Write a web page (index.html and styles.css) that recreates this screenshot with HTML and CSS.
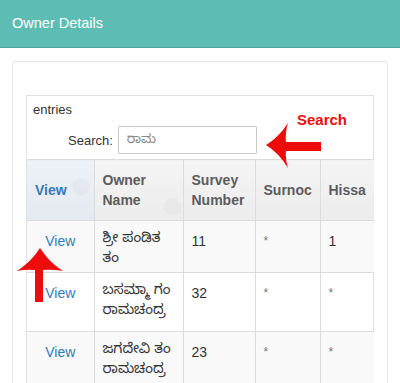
FILE: index.html
```html
<!DOCTYPE html>
<html>
<head>
<meta charset="utf-8">
<link rel="stylesheet" href="styles.css">
</head>
<body>
<div class="page">
  <header class="topbar">Owner Details</header>
  <main class="content">
    <section class="card">
      <div class="box">
        <div class="entries">entries</div>
        <div class="search"><label>Search:</label><input type="text" class="search-input" value="ರಾಮ"></div>
        <table class="grid">
          <colgroup>
            <col class="c-view"><col class="c-owner"><col class="c-survey"><col class="c-surnoc"><col class="c-hissa">
          </colgroup>
          <thead>
            <tr>
              <th class="sorted">View</th>
              <th class="sortable">Owner Name</th>
              <th>Survey Number</th>
              <th>Surnoc</th>
              <th>Hissa</th>
            </tr>
          </thead>
          <tbody>
            <tr class="odd short">
              <td class="view"><a href="#">View</a></td>
              <td><div class="owner">ಶ್ರೀ ಪಂಡಿತ<br>ತಂ</div></td>
              <td>11</td>
              <td class="star">*</td>
              <td>1</td>
            </tr>
            <tr>
              <td class="view"><a href="#">View</a></td>
              <td><div class="owner">ಬಸಮ್ಮಾ ಗಂ<br>ರಾಮಚಂದ್ರ</div></td>
              <td>32</td>
              <td class="star">*</td>
              <td class="star">*</td>
            </tr>
            <tr class="odd">
              <td class="view"><a href="#">View</a></td>
              <td><div class="owner">ಜಗದೇವಿ ತಂ<br>ರಾಮಚಂದ್ರ</div></td>
              <td>23</td>
              <td class="star">*</td>
              <td class="star">*</td>
            </tr>
          </tbody>
        </table>
      </div>
    </section>
  </main>
  <div class="note-search">Search</div>
  <svg class="arrow-left" width="70" height="56" viewBox="0 0 70 56"><path d="M6,27 Q19,19 28,5 Q25,15 26,24 L61,24 L61,33 L26,33 Q25,41 28,50 Q19,35 6,27 Z" fill="#ee0b0b"/></svg>
  <svg class="arrow-up" width="56" height="62" viewBox="0 0 56 62"><path d="M28,4 Q37,18 51,27 Q41,25 31,26 L31,58 L23,58 L23,26 Q14,25 5,27 Q19,18 28,4 Z" fill="#ee0b0b"/></svg>
</div>
</body>
</html>
```
FILE: styles.css
```css
html, body {
  margin: 0;
  padding: 0;
  background: #ffffff;
}
body {
  font-family: "Liberation Sans", Arial, "Noto Sans Kannada", "Lohit Kannada", sans-serif;
  font-size: 14px;
  color: #333333;
  overflow: hidden;
}
.page {
  position: relative;
  width: 400px;
  height: 383px;
  overflow: hidden;
}
.topbar {
  height: 48px;
  box-sizing: border-box;
  background: #5dbdb4;
  border-bottom: 1px solid #4ea79e;
  color: #ffffff;
  font-size: 14.5px;
  line-height: 46px;
  padding-left: 12px;
}
.content {
  padding: 13px 12px 0 12px;
}
.card {
  border: 1px solid #e4e4e4;
  border-radius: 3px;
  padding: 33px 13px 0 13px;
  height: 400px;
}
.box {
  border: 1px solid #e2e2e2;
  border-bottom: none;
}
.entries {
  font-size: 13px;
  padding: 6px 0 0 6px;
  height: 22px;
  box-sizing: border-box;
}
.search {
  display: flex;
  align-items: center;
  gap: 5px;
  padding: 8px 0 5px 41px;
  font-size: 13px;
}
.search label {
  color: #333;
}
.search-input {
  width: 139px;
  height: 28px;
  box-sizing: border-box;
  border: 1px solid #c8c8c8;
  border-radius: 1px;
  padding: 0 8px;
  font-family: inherit;
  font-size: 13px;
  color: #888;
  background: #fff;
  outline: none;
}
.grid {
  width: 347px;
  border-collapse: collapse;
  table-layout: fixed;
}
.c-view { width: 67px; }
.c-owner { width: 89px; }
.c-survey { width: 72px; }
.c-surnoc { width: 65px; }
.c-hissa { width: 54px; }
.grid th {
  position: relative;
  text-align: left;
  font-weight: bold;
  color: #5c5c5c;
  line-height: 20px;
  padding: 10px 6px 10px 8px;
  height: 40px;
  vertical-align: middle;
  border-left: 1px solid #dcdcdc;
  border-top: 1px solid #dcdcdc;
  background: linear-gradient(#f4f4f4, #ececec);
  overflow: hidden;
}
.grid th:first-child {
  border-left: none;
}
.grid th.sorted {
  color: #337ab7;
  background: linear-gradient(#eef2f7, #e3e9f0);
}
.grid th.sorted::after {
  content: "";
  position: absolute;
  right: 4px;
  top: 18px;
  width: 18px;
  height: 18px;
  border-radius: 50%;
  background: rgba(0, 0, 0, 0.025);
}
.grid th.sortable::after {
  content: "";
  position: absolute;
  right: 1px;
  top: 38px;
  width: 18px;
  height: 18px;
  border-radius: 50%;
  background: rgba(0, 0, 0, 0.025);
}
.grid td {
  vertical-align: top;
  line-height: 20px;
  padding: 10px 6px 8px 8px;
  border-left: 1px solid #dcdcdc;
  border-top: 1px solid #dcdcdc;
  color: #333;
}
.grid td:first-child {
  border-left: none;
}
.grid tr.odd td {
  background: #f9f9f9;
}
.grid td.view {
  text-align: center;
  padding-left: 6px;
}
.grid td.view a {
  color: #337ab7;
  text-decoration: none;
}
.grid td.star {
  color: #777;
  font-size: 12px;
}
.owner {
  font-family: "Noto Sans Kannada", "Lohit Kannada", "Noto Serif Kannada", "Liberation Sans", sans-serif;
  font-size: 14px;
  line-height: 20px;
  height: 40px;
  overflow: visible;
}
.grid tr.short .owner {
  height: 33px;
}
.note-search {
  position: absolute;
  left: 297px;
  top: 111px;
  color: #ee0b0b;
  font-weight: bold;
  font-size: 15px;
}
.arrow-left {
  position: absolute;
  left: 260px;
  top: 118px;
}
.arrow-up {
  position: absolute;
  left: 12px;
  top: 244px;
}
```
